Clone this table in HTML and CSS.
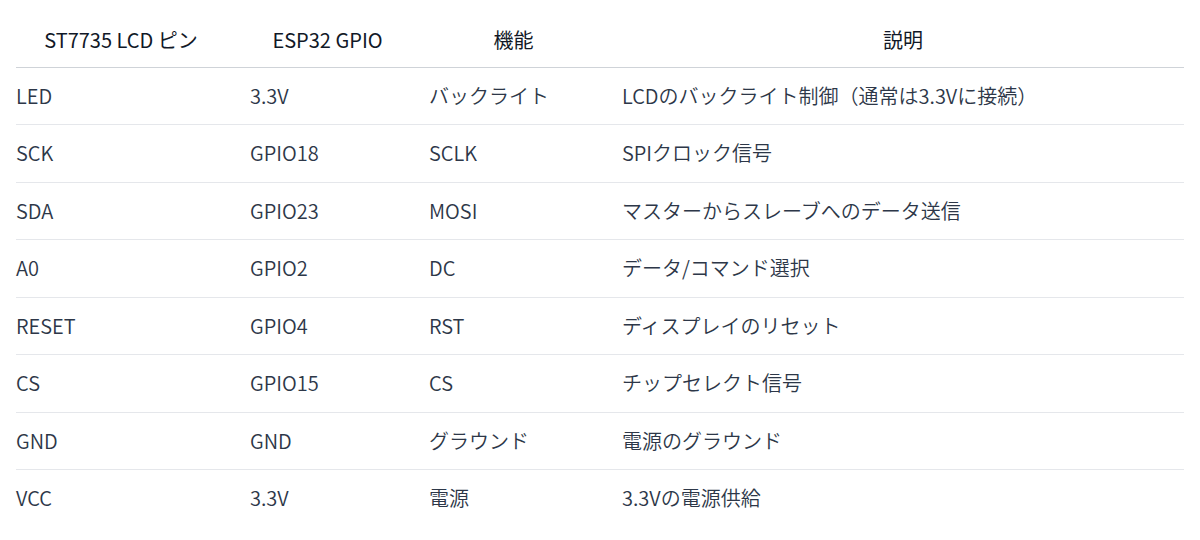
FILE: index.html
```html
<!DOCTYPE html>
<html lang="ja">
<head>
<meta charset="utf-8">
<link rel="stylesheet" href="styles.css">
</head>
<body>
<div class="wrap">
<table class="pins">
  <colgroup>
    <col class="c1"><col class="c2"><col class="c3"><col class="c4">
  </colgroup>
  <thead>
    <tr><th>ST7735 LCD ピン</th><th>ESP32 GPIO</th><th>機能</th><th>説明</th></tr>
  </thead>
  <tbody>
    <tr><td>LED</td><td>3.3V</td><td>バックライト</td><td>LCDのバックライト制御（通常は3.3Vに接続）</td></tr>
    <tr><td>SCK</td><td>GPIO18</td><td>SCLK</td><td>SPIクロック信号</td></tr>
    <tr><td>SDA</td><td>GPIO23</td><td>MOSI</td><td>マスターからスレーブへのデータ送信</td></tr>
    <tr><td>A0</td><td>GPIO2</td><td>DC</td><td>データ/コマンド選択</td></tr>
    <tr><td>RESET</td><td>GPIO4</td><td>RST</td><td>ディスプレイのリセット</td></tr>
    <tr><td>CS</td><td>GPIO15</td><td>CS</td><td>チップセレクト信号</td></tr>
    <tr><td>GND</td><td>GND</td><td>グラウンド</td><td>電源のグラウンド</td></tr>
    <tr><td>VCC</td><td>3.3V</td><td>電源</td><td>3.3Vの電源供給</td></tr>
  </tbody>
</table>
</div>
</body>
</html>
```
FILE: styles.css
```css
html, body {
  margin: 0;
  padding: 0;
  background: #ffffff;
}
.wrap {
  padding: 12px 16px 0 16px;
}
.pins {
  width: 1168px;
  border-collapse: collapse;
  table-layout: fixed;
  font-family: "Noto Sans CJK JP", "Noto Sans", sans-serif;
  font-size: 20px;
  line-height: 30px;
  font-weight: 350;
  color: #2d3748;
}
.c1 { width: 234px; }
.c2 { width: 179px; }
.c3 { width: 193px; }
.c4 { width: 562px; }
.pins th {
  font-weight: 400;
  color: #111827;
  text-align: center;
  padding: 13px 24px 11.5px 0;
  border-bottom: 1px solid #cfd3d8;
}
.pins td {
  text-align: left;
  padding: 13.25px 24px 13.25px 0;
  border-bottom: 1px solid #e5e7eb;
  white-space: nowrap;
}
.pins th:last-child, .pins td:last-child {
  padding-right: 0;
}
.pins tbody tr:last-child td {
  border-bottom: none;
}
```
